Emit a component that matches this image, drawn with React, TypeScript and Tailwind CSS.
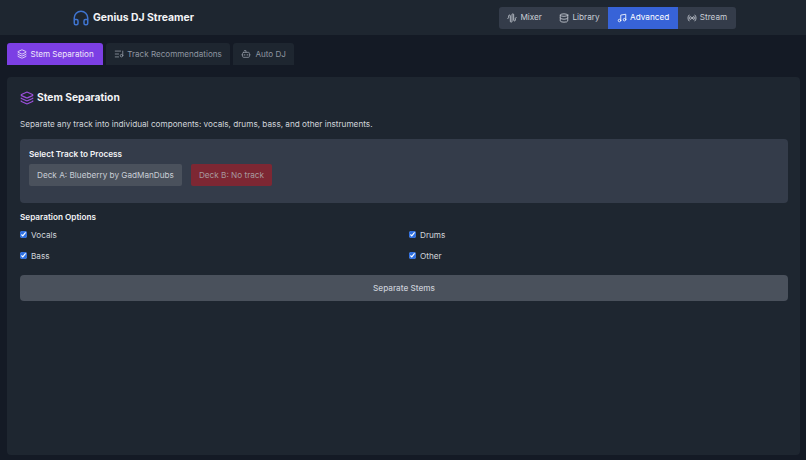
import { AudioWaveform, Bot, Database, Headphones, Layers, ListMusic, Music, Radio } from "lucide-react";

const navItems = [
  { label: "Mixer", icon: AudioWaveform },
  { label: "Library", icon: Database },
  { label: "Advanced", icon: Music, active: true },
  { label: "Stream", icon: Radio },
];

const tabs = [
  { label: "Stem Separation", icon: Layers, cls: "gap-[4px] bg-[#7c3fe4] px-[9.5px] text-[#f0e9fb]" },
  { label: "Track Recommendations", icon: ListMusic, cls: "gap-[3px] bg-[#1e2630] px-[8px] text-[#8f96a1]" },
  { label: "Auto DJ", icon: Bot, cls: "gap-[4px] bg-[#1e2630] px-[8.5px] text-[#8f96a1]" },
];

const options = ["Vocals", "Drums", "Bass", "Other"];

export default function App() {
  return (
    <div className="flex h-[460px] w-[806px] flex-col overflow-hidden bg-[#141a25] font-['Inter',sans-serif] text-white">
      <header className="flex h-[35px] shrink-0 items-center justify-between bg-[#1e2630] pl-[72px] pr-[70px]">
        <div className="flex items-center gap-[3px]">
          <Headphones size={18} strokeWidth={2} className="text-[#3f74d0]" />
          <span className="text-[10.4px] font-bold text-[#f3f4f6]">Genius DJ Streamer</span>
        </div>
        <nav className="flex h-[22px] overflow-hidden rounded-[3px] bg-[#343c4a]">
          {navItems.map((n) => (
            <button
              key={n.label}
              type="button"
              className={
                n.active
                  ? "flex items-center gap-[3px] bg-[#3763d8] px-[8.75px] text-[8.2px] text-white"
                  : "flex items-center gap-[3px] px-[8.75px] text-[8.2px] text-[#c9ced6]"
              }
            >
              <n.icon size={10} />
              {n.label}
            </button>
          ))}
        </nav>
      </header>

      <div className="flex flex-1 flex-col pb-[5px] pl-[7px] pr-[6px]">
        <div className="mt-[8px] flex gap-[3px]">
          {tabs.map((t) => (
            <button
              key={t.label}
              type="button"
              className={`flex h-[22px] items-center rounded-t-[3px] text-[8.1px] ${t.cls}`}
            >
              <t.icon size={10} />
              {t.label}
            </button>
          ))}
        </div>

        <main className="mt-[12px] flex-1 rounded-[4px] bg-[#1e2630] pl-[13px] pr-[12px] pt-[13px]">
          <h2 className="flex items-center gap-[3px] text-[10.25px] font-bold text-[#f3f4f6]">
            <Layers size={14} className="text-[#9d50dd]" />
            Stem Separation
          </h2>
          <p className="mt-[13px] text-[8.2px] text-[#d1d5db]">
            Separate any track into individual components: vocals, drums, bass, and other instruments.
          </p>

          <section className="mt-[8px] h-[64px] rounded-[4px] bg-[#343c4a] px-[9px] pt-[9px]">
            <h3 className="text-[8.2px] font-semibold leading-[12px] text-[#f3f4f6]">Select Track to Process</h3>
            <div className="mt-[4px] flex gap-[9px]">
              <button type="button" className="h-[22px] rounded-[2px] bg-[#4a515c] px-[8px] text-[8.2px] text-[#c9ced6]">
                Deck A: Blueberry by GadManDubs
              </button>
              <button type="button" className="h-[22px] rounded-[2px] bg-[#7d2733] px-[8px] text-[8.2px] text-[#a89a9f]">
                Deck B: No track
              </button>
            </div>
          </section>

          <h3 className="mt-[8px] text-[8.2px] font-semibold leading-[12px] text-[#f3f4f6]">Separation Options</h3>
          <div className="mt-[5px] grid grid-cols-2 gap-x-[10px] gap-y-[7px]">
            {options.map((o) => (
              <label key={o} className="flex h-[14px] items-center gap-[4px] text-[8.2px] text-[#d1d5db]">
                <input type="checkbox" defaultChecked className="h-[7px] w-[7px] accent-[#2f6fe0]" />
                {o}
              </label>
            ))}
          </div>

          <button type="button" className="mt-[12px] h-[26px] w-full rounded-[4px] bg-[#4a515c] text-[8.2px] font-medium text-[#c9ced6]">
            Separate Stems
          </button>
        </main>
      </div>
    </div>
  );
}
